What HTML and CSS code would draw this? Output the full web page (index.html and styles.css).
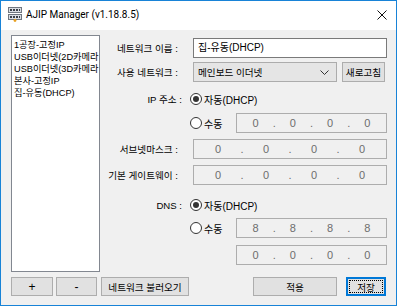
FILE: index.html
```html
<!DOCTYPE html>
<html lang="ko">
<head>
    <meta charset="UTF-8">
    <title>AJIP Manager</title>
    <link rel="stylesheet" href="styles.css">
</head>
<body>
    <div class="window">
        <div class="titlebar">
            <svg class="app-icon" width="16" height="16" viewBox="0 0 16 16">
                <rect x="1.5" y="1.5" width="13" height="5" fill="#d9dde3" stroke="#6f7680"/>
                <rect x="1.5" y="8.5" width="13" height="5" fill="#d9dde3" stroke="#6f7680"/>
                <rect x="3" y="3" width="2" height="2" fill="#3b4048"/>
                <rect x="6" y="3" width="2" height="2" fill="#3b4048"/>
                <rect x="9" y="3" width="2" height="2" fill="#3b4048"/>
                <rect x="12" y="3" width="1" height="2" fill="#3b4048"/>
                <rect x="3" y="10" width="2" height="2" fill="#3b4048"/>
                <rect x="6" y="10" width="2" height="2" fill="#3b4048"/>
                <rect x="9" y="10" width="2" height="2" fill="#3b4048"/>
                <rect x="12" y="10" width="1" height="2" fill="#3b4048"/>
                <circle cx="8" cy="14.5" r="1.4" fill="#e8a020"/>
            </svg>
            <span class="title">AJIP Manager (v1.18.8.5)</span>
            <svg class="close" width="10" height="10" viewBox="0 0 10 10">
                <path d="M0.5 0.5 L9.5 9.5 M9.5 0.5 L0.5 9.5" stroke="#111" stroke-width="1"/>
            </svg>
        </div>

        <div class="client">
            <div class="top">
                <div class="listbox">
                    <div class="item">1공장-고정IP</div>
                    <div class="item">USB이더넷(2D카메라</div>
                    <div class="item">USB이더넷(3D카메라</div>
                    <div class="item">본사-고정IP</div>
                    <div class="item">집-유동(DHCP)</div>
                </div>

                <div class="form">
                    <div class="row r-name">
                        <span class="label">네트워크 이름 :</span>
                        <div class="textbox">집-유동(DHCP)</div>
                    </div>
                    <div class="row r-adapter">
                        <span class="label">사용 네트워크 :</span>
                        <div class="select">
                            <span>메인보드 이더넷</span>
                            <svg width="9" height="5" viewBox="0 0 9 5">
                                <path d="M0.5 0.5 L4.5 4.5 L8.5 0.5" fill="none" stroke="#333"/>
                            </svg>
                        </div>
                        <div class="btn btn-refresh">새로고침</div>
                    </div>
                    <div class="row r-ipauto">
                        <span class="label label-radio">IP 주소 :</span>
                        <span class="radio checked"></span>
                        <span class="radio-text">자동(DHCP)</span>
                    </div>
                    <div class="row r-ipmanual">
                        <span class="radio"></span>
                        <span class="radio-text">수동</span>
                        <div class="ipbox short">
                            <span>0</span><i>.</i><span>0</span><i>.</i><span>0</span><i>.</i><span>0</span>
                        </div>
                    </div>
                    <div class="row r-mask">
                        <span class="label">서브넷마스크 :</span>
                        <div class="ipbox">
                            <span>0</span><i>.</i><span>0</span><i>.</i><span>0</span><i>.</i><span>0</span>
                        </div>
                    </div>
                    <div class="row r-gateway">
                        <span class="label">기본 게이트웨이 :</span>
                        <div class="ipbox">
                            <span>0</span><i>.</i><span>0</span><i>.</i><span>0</span><i>.</i><span>0</span>
                        </div>
                    </div>
                    <div class="row r-dnsauto">
                        <span class="label label-radio">DNS :</span>
                        <span class="radio checked"></span>
                        <span class="radio-text">자동(DHCP)</span>
                    </div>
                    <div class="row r-dns1">
                        <span class="radio"></span>
                        <span class="radio-text">수동</span>
                        <div class="ipbox short">
                            <span>8</span><i>.</i><span>8</span><i>.</i><span>8</span><i>.</i><span>8</span>
                        </div>
                    </div>
                    <div class="row r-dns2">
                        <div class="ipbox short">
                            <span>0</span><i>.</i><span>0</span><i>.</i><span>0</span><i>.</i><span>0</span>
                        </div>
                    </div>
                </div>
            </div>

            <div class="bottom">
                <div class="btn btn-plus">+</div>
                <div class="btn btn-minus">-</div>
                <div class="btn btn-load">네트워크 불러오기</div>
                <div class="btn btn-apply">적용</div>
                <div class="btn btn-save"><span>저장</span></div>
            </div>
        </div>
    </div>
</body>
</html>
```

FILE: styles.css
```css
body {
    margin: 0;
    font-family: "Liberation Sans", "Noto Sans CJK KR", sans-serif;
    font-size: 9.6px;
    color: #000;
}
.window {
    width: 397px;
    height: 306px;
    box-sizing: border-box;
    border: 1px solid #1883d7;
    background: #f0f0f0;
    display: flex;
    flex-direction: column;
}
.titlebar {
    height: 29px;
    background: #fff;
    display: flex;
    align-items: center;
    flex-shrink: 0;
}
.app-icon {
    margin-left: 6px;
    margin-top: -3px;
}
.title {
    margin-left: 3px;
    margin-top: -3px;
    font-family: Roboto, "Liberation Sans", sans-serif;
    font-size: 10px;
}
.close {
    margin-left: auto;
    margin-right: 9px;
    margin-top: -2px;
}
.client {
    flex: 1;
    padding: 5px 9px 0 10px;
    display: flex;
    flex-direction: column;
}
.top {
    display: flex;
}
.listbox {
    width: 89px;
    height: 237px;
    flex-shrink: 0;
    box-sizing: border-box;
    border: 1px solid #828790;
    background: #fff;
    padding: 3px 0 0 2px;
    overflow: hidden;
    font-size: 9.2px;
}
.item {
    height: 12px;
    line-height: 12px;
    white-space: nowrap;
}
.form {
    width: 287px;
    flex-shrink: 0;
    display: flex;
    flex-direction: column;
}
.row {
    display: flex;
    align-items: center;
}
.row > * {
    flex-shrink: 0;
}
.label {
    width: 78px;
    margin-right: 15px;
    text-align: right;
    white-space: nowrap;
}
.label-radio {
    width: 82px;
    margin-right: 8px;
}
.r-name { margin-top: 3px; height: 20px; }
.r-adapter { margin-top: 4px; height: 20px; }
.r-ipauto { margin-top: 10px; height: 14px; }
.r-ipmanual { margin-top: 7px; height: 20px; padding-left: 90px; }
.r-mask { margin-top: 6px; height: 20px; }
.r-gateway { margin-top: 6px; height: 20px; }
.r-dnsauto { margin-top: 13px; height: 14px; }
.r-dns1 { margin-top: 6px; height: 20px; padding-left: 90px; }
.r-dns2 { margin-top: 7px; height: 20px; padding-left: 136px; }
.textbox {
    width: 194px;
    height: 20px;
    box-sizing: border-box;
    border: 1px solid #7a7a7a;
    background: #fff;
    padding-left: 4px;
    line-height: 18px;
    font-size: 10px;
}
.select {
    width: 144px;
    height: 20px;
    box-sizing: border-box;
    border: 1px solid #acacac;
    background: #e5e5e5;
    padding: 0 7px 0 4px;
    display: flex;
    align-items: center;
    justify-content: space-between;
}
.btn {
    box-sizing: border-box;
    border: 1px solid #adadad;
    background: #e1e1e1;
    display: flex;
    align-items: center;
    justify-content: center;
    white-space: nowrap;
}
.btn-refresh {
    width: 43px;
    height: 20px;
    margin-left: 5px;
}
.radio {
    width: 12px;
    height: 12px;
    box-sizing: border-box;
    border: 1px solid #333;
    border-radius: 50%;
    background: #fff;
    display: flex;
    align-items: center;
    justify-content: center;
}
.radio.checked::after {
    content: "";
    width: 6px;
    height: 6px;
    border-radius: 50%;
    background: #333;
}
.radio-text {
    margin-left: 2px;
    white-space: nowrap;
    font-size: 10px;
}
.r-ipmanual .radio-text, .r-dns1 .radio-text {
    width: 20px;
}
.ipbox {
    width: 194px;
    height: 20px;
    box-sizing: border-box;
    border: 1px solid #adadad;
    background: #f0f0f0;
    color: #6d6d6d;
    display: flex;
    align-items: center;
    font-size: 11px;
}
.ipbox.short {
    width: 151px;
}
.r-ipmanual .ipbox, .r-dns1 .ipbox {
    margin-left: 12px;
}
.ipbox span {
    flex: 1;
    text-align: center;
}
.ipbox i {
    font-style: normal;
    width: 0;
    display: flex;
    justify-content: center;
}
.bottom {
    display: flex;
    margin-top: 5px;
    height: 19px;
}
.bottom .btn {
    height: 19px;
}
.btn-plus { width: 42px; font-size: 12px; }
.btn-minus { width: 41px; margin-left: 3px; font-size: 12px; }
.btn-load { width: 88px; margin-left: 4px; }
.btn-apply { width: 84px; margin-left: auto; }
.btn-save {
    width: 40px;
    margin-left: 9px;
    margin-right: 1px;
    border: 2px solid #0078d7;
    padding: 1px;
}
.btn-save span {
    flex: 1;
    align-self: stretch;
    border: 1px dotted #000;
    display: flex;
    align-items: center;
    justify-content: center;
}
```
